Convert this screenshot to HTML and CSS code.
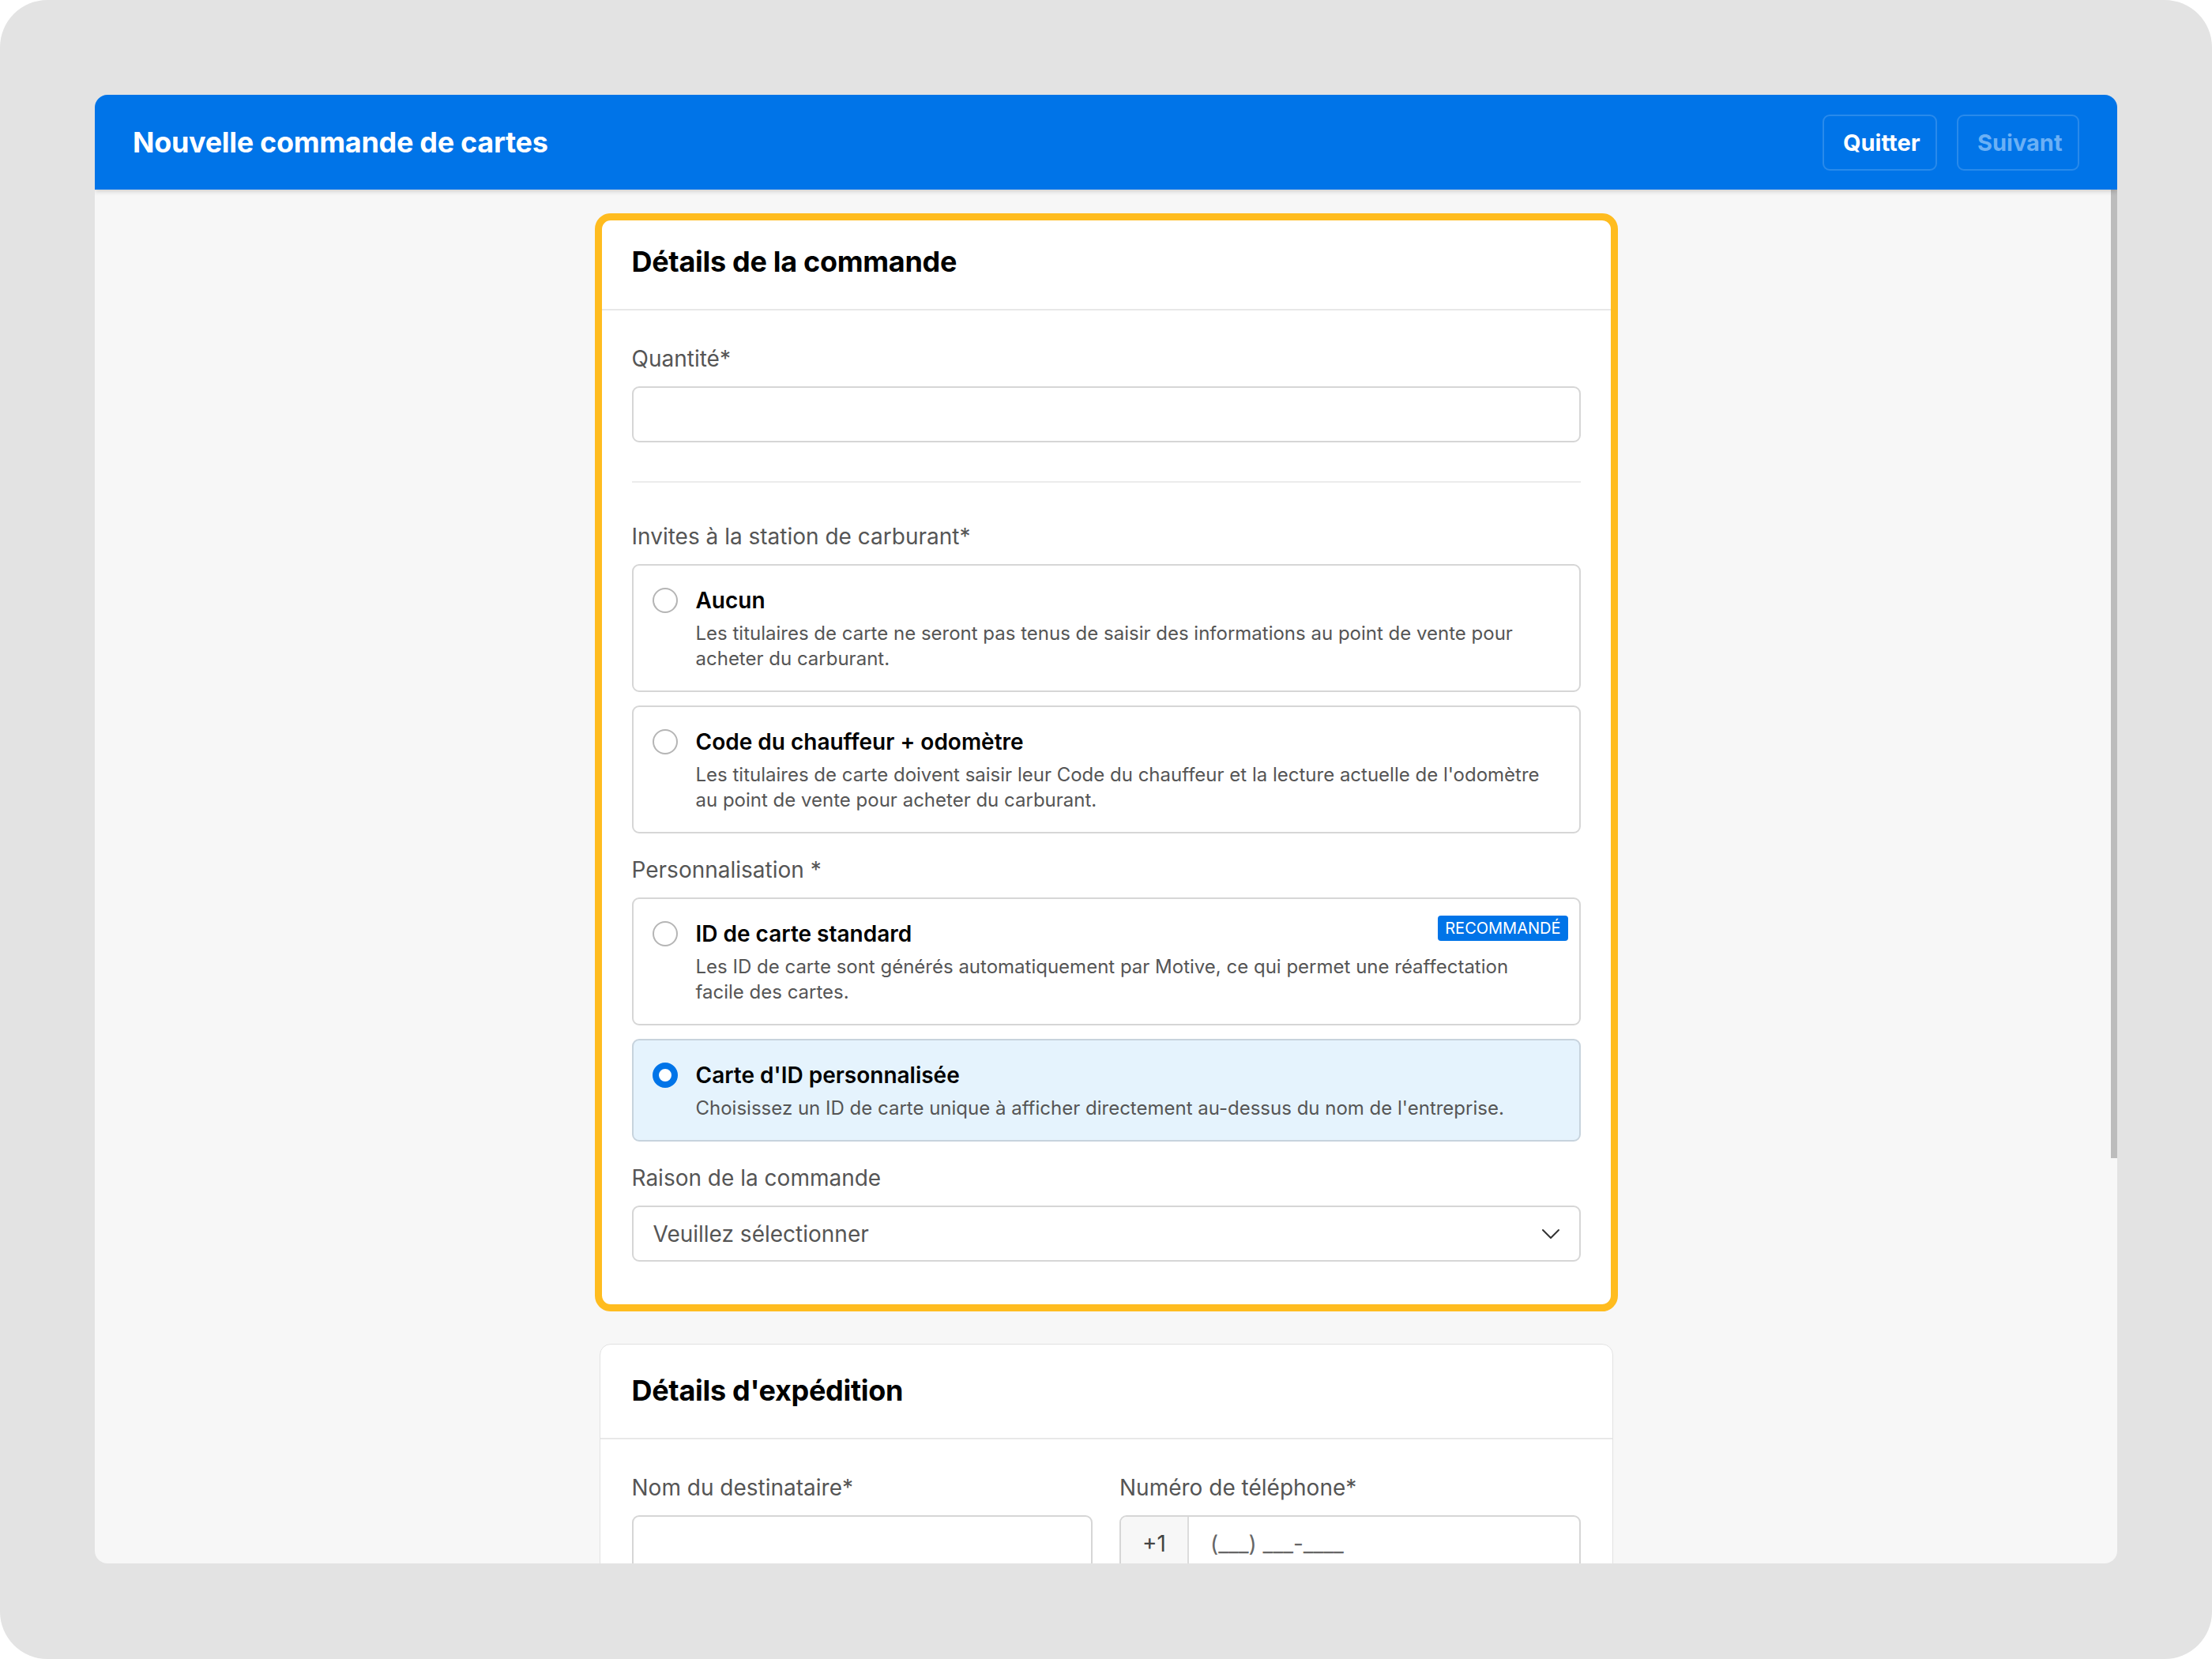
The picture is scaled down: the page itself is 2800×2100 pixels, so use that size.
FILE: index.html
```html
<!DOCTYPE html>
<html lang="fr">
<head>
<meta charset="utf-8">
<title>Nouvelle commande de cartes</title>
<link rel="stylesheet" href="styles.css">
</head>
<body>
<div class="frame">
  <div class="window">
    <header class="topbar">
      <h1 class="topbar-title">Nouvelle commande de cartes</h1>
      <div class="topbar-actions">
        <button class="btn btn-quit">Quitter</button>
        <button class="btn btn-next">Suivant</button>
      </div>
    </header>
    <main class="content">
      <div class="scrollbar"></div>
      <section class="card card-active">
        <div class="card-head"><h2>Détails de la commande</h2></div>
        <div class="card-body">
          <div class="field">
            <label class="label">Quantité*</label>
            <div class="input"></div>
          </div>
          <hr class="sep">
          <div class="field">
            <label class="label">Invites à la station de carburant*</label>
            <div class="options">
              <div class="option">
                <span class="radio"></span>
                <div class="option-text">
                  <div class="option-title">Aucun</div>
                  <div class="option-desc">Les titulaires de carte ne seront pas tenus de saisir des informations au point de vente pour acheter du carburant.</div>
                </div>
              </div>
              <div class="option">
                <span class="radio"></span>
                <div class="option-text">
                  <div class="option-title">Code du chauffeur + odomètre</div>
                  <div class="option-desc">Les titulaires de carte doivent saisir leur Code du chauffeur et la lecture actuelle de l'odomètre au point de vente pour acheter du carburant.</div>
                </div>
              </div>
            </div>
          </div>
          <div class="field">
            <label class="label">Personnalisation *</label>
            <div class="options">
              <div class="option option-badged">
                <span class="radio"></span>
                <div class="option-text">
                  <div class="option-title">ID de carte standard</div>
                  <div class="option-desc">Les ID de carte sont générés automatiquement par Motive, ce qui permet une réaffectation facile des cartes.</div>
                </div>
                <span class="badge">RECOMMANDÉ</span>
              </div>
              <div class="option option-selected">
                <span class="radio radio-on"></span>
                <div class="option-text">
                  <div class="option-title">Carte d'ID personnalisée</div>
                  <div class="option-desc">Choisissez un ID de carte unique à afficher directement au-dessus du nom de l'entreprise.</div>
                </div>
              </div>
            </div>
          </div>
          <div class="field">
            <label class="label">Raison de la commande</label>
            <div class="input select">
              <span class="placeholder">Veuillez sélectionner</span>
              <svg class="chevron" width="24" height="14" viewBox="0 0 24 14"><path d="M2 2 L12 12 L22 2" fill="none" stroke="#333" stroke-width="2" stroke-linecap="round" stroke-linejoin="round"/></svg>
            </div>
          </div>
        </div>
      </section>

      <section class="card">
        <div class="card-head"><h2>Détails d'expédition</h2></div>
        <div class="card-body">
          <div class="grid2">
            <div class="field">
              <label class="label">Nom du destinataire*</label>
              <div class="input"></div>
            </div>
            <div class="field">
              <label class="label">Numéro de téléphone*</label>
              <div class="input phone">
                <span class="prefix">+1</span>
                <span class="placeholder phone-ph">(___) ___-____</span>
              </div>
            </div>
          </div>
        </div>
      </section>
    </main>
  </div>
</div>
</body>
</html>
```

FILE: styles.css
```css
* { box-sizing: border-box; }
html, body { margin: 0; padding: 0; background: #ffffff; }
body {
  font-family: Inter, "Noto Sans", "Liberation Sans", sans-serif;
  color: #111;
}
.frame {
  width: 2800px;
  height: 2100px;
  background: #e3e3e3;
  border-radius: 60px;
  padding: 120px 120px 121px 120px;
}
.window {
  width: 2560px;
  height: 1859px;
  background: #f7f7f7;
  border-radius: 16px;
  overflow: hidden;
  display: flex;
  flex-direction: column;
}
.topbar {
  height: 120px;
  flex: 0 0 120px;
  background: #0074e8;
  display: flex;
  align-items: center;
  justify-content: space-between;
  padding: 0 48px;
  box-shadow: 0 2px 6px rgba(0,0,0,0.18);
  position: relative;
  z-index: 2;
}
.topbar-title {
  margin: 0;
  color: #fff;
  font-size: 36px;
  font-weight: 700;
  letter-spacing: -0.3px;
}
.topbar-actions { display: flex; gap: 25px; }
.btn {
  height: 71px;
  border: 2px solid rgba(255,255,255,0.16);
  border-radius: 9px;
  background: transparent;
  font-family: inherit;
  font-size: 29px;
  font-weight: 700;
  padding: 0 24px;
}
.btn-quit { color: #fff; width: 145px; }
.btn-next { color: #6bb0f5; width: 155px; }

.content {
  flex: 1;
  position: relative;
  overflow: hidden;
  padding-top: 36px;
}
.scrollbar {
  position: absolute;
  top: 0;
  right: 0;
  width: 8px;
  height: 1226px;
  background: #bcbcbc;
}
.card {
  width: 1283px;
  margin: 0 auto 47px auto;
  background: #fff;
  border: 1px solid #e2e2e2;
  border-radius: 14px;
}
.card-active {
  border-color: #ffbc1f;
  outline: 9px solid #ffbc1f;
  outline-offset: -3px;
}
.card-head {
  padding: 36px 40px 38px 40px;
  border-bottom: 2px solid #e8e8e8;
}
.card-active .card-head {
  padding-top: 32px;
}
.card-head h2 {
  margin: 0;
  font-size: 36px;
  line-height: 44px;
  font-weight: 700;
  color: #000;
  letter-spacing: -0.3px;
}
.card-body {
  padding: 43px 40px 56px 40px;
  display: flex;
  flex-direction: column;
  gap: 28px;
}
.field { display: flex; flex-direction: column; }
.label {
  font-size: 28px;
  line-height: 36px;
  color: #555;
  margin-bottom: 17px;
}
.input {
  height: 71px;
  border: 2px solid #d6d6d6;
  border-radius: 9px;
  background: #fff;
}
.sep {
  border: 0;
  border-top: 2px solid #ececec;
  margin: 21px 0 22px 0;
}
.options { display: flex; flex-direction: column; gap: 17px; }
.option {
  position: relative;
  display: flex;
  align-items: flex-start;
  border: 2px solid #d6d6d6;
  border-radius: 9px;
  padding: 26px 24px 24px 24px;
  background: #fff;
}
.option-selected {
  background: #e5f3fd;
  border-color: #c7d3dd;
}
.radio {
  flex: 0 0 32px;
  width: 32px;
  height: 32px;
  border-radius: 50%;
  border: 2px solid #b5b5b5;
  margin-top: 2px;
  margin-right: 23px;
  background: #fff;
}
.radio-on {
  border: 8px solid #0074e8;
}
.option-text { flex: 1; }
.option-title {
  font-size: 28px;
  line-height: 36px;
  font-weight: 600;
  color: #000;
}
.option-desc {
  margin-top: 8px;
  font-size: 24px;
  line-height: 32px;
  color: #555;
}
.badge {
  position: absolute;
  top: 21px;
  right: 14px;
  height: 32px;
  padding: 0 9px;
  background: #0074e8;
  color: #fff;
  font-size: 20px;
  line-height: 32px;
  border-radius: 4px;
}
.select {
  display: flex;
  align-items: center;
  justify-content: space-between;
  padding: 0 24px 0 25px;
}
.placeholder {
  font-size: 28px;
  color: #555;
}
.chevron { display: block; }
.grid2 {
  display: grid;
  grid-template-columns: 1fr 1fr;
  column-gap: 34px;
}
.phone {
  display: flex;
  align-items: stretch;
  overflow: hidden;
}
.prefix {
  width: 86px;
  flex: 0 0 86px;
  background: #f7f7f7;
  border-right: 2px solid #dcdcdc;
  display: flex;
  align-items: center;
  justify-content: center;
  font-size: 28px;
  color: #444;
}
.phone-ph {
  display: flex;
  align-items: center;
  padding-left: 27px;
  color: #666;
}
```
